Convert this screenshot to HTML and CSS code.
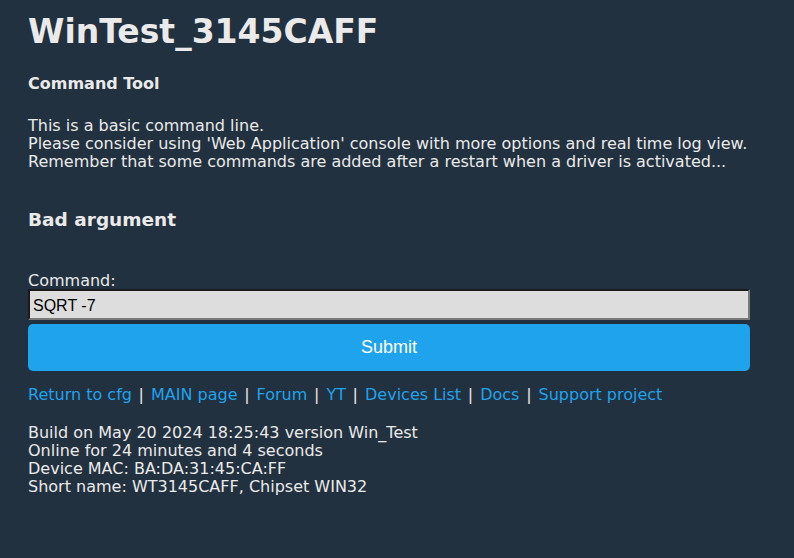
FILE: index.html
```html
<!DOCTYPE html>
<html>
<head>
<meta charset="utf-8">
<title>WinTest_3145CAFF</title>
<link rel="stylesheet" href="styles.css">
</head>
<body>
<div class="page">
  <h1 class="title">WinTest_3145CAFF</h1>
  <h3 class="subtitle">Command Tool</h3>
  <p class="intro">This is a basic command line.<br>Please consider using 'Web Application' console with more options and real time log view.<br>Remember that some commands are added after a restart when a driver is activated...</p>
  <h3 class="result">Bad argument</h3>
  <form class="cmd-form">
    <label class="cmd-label" for="cmd">Command:</label>
    <input class="cmd-input" id="cmd" type="text" value="SQRT -7">
    <button class="cmd-submit" type="button">Submit</button>
  </form>
  <p class="links"><a href="#">Return to cfg</a><span class="sep">|</span><a href="#">MAIN page</a><span class="sep">|</span><a href="#">Forum</a><span class="sep">|</span><a href="#">YT</a><span class="sep">|</span><a href="#">Devices List</a><span class="sep">|</span><a href="#">Docs</a><span class="sep">|</span><a href="#">Support project</a></p>
  <p class="info">Build on May 20 2024 18:25:43 version Win_Test<br>Online for 24 minutes and 4 seconds<br>Device MAC: BA:DA:31:45:CA:FF<br>Short name: WT3145CAFF, Chipset WIN32</p>
</div>
</body>
</html>
```

FILE: styles.css
```css
html, body {
  margin: 0;
  padding: 0;
  background: #22313f;
}
body {
  font-family: "DejaVu Sans", Verdana, sans-serif;
  font-size: 16px;
  line-height: 18px;
  color: #eaeaea;
}
.page {
  width: 722px;
  padding: 12px 0 40px 28px;
}
.title {
  margin: 0;
  font-size: 33px;
  line-height: 40px;
  font-weight: bold;
  color: #eaeaea;
}
.subtitle {
  margin: 23px 0 0;
  font-size: 16px;
  line-height: 18px;
  font-weight: bold;
}
.intro {
  margin: 24px 0 0;
}
.result {
  margin: 38px 0 0;
  font-size: 18.5px;
  line-height: 22px;
  font-weight: bold;
}
.cmd-form {
  margin: 42px 0 0;
  display: flex;
  flex-direction: column;
}
.cmd-label {
  display: block;
  line-height: 16px;
}
.cmd-input {
  box-sizing: border-box;
  height: 31px;
  width: 100%;
  margin: 0;
  padding: 2px 3px 0;
  background: #dddddd;
  color: #000;
  font-family: "Liberation Sans", Arial, sans-serif;
  font-size: 16px;
  border-style: solid;
  border-width: 2px;
  border-color: #1b1b1b #7a7a7a #7a7a7a #1b1b1b;
  border-radius: 0;
  outline: none;
}
.cmd-submit {
  margin: 4px 0 0;
  height: 47px;
  width: 100%;
  border: 0;
  border-radius: 5px;
  background: #1fa3ec;
  color: #fff;
  font-family: "Liberation Sans", Arial, sans-serif;
  font-size: 18px;
  cursor: pointer;
}
.links {
  margin: 15px 0 0;
}
.links a {
  color: #1fa3ec;
  text-decoration: none;
}
.sep {
  padding: 0 7px 0 6.7px;
}
.info {
  margin: 20px 0 0;
}
```
